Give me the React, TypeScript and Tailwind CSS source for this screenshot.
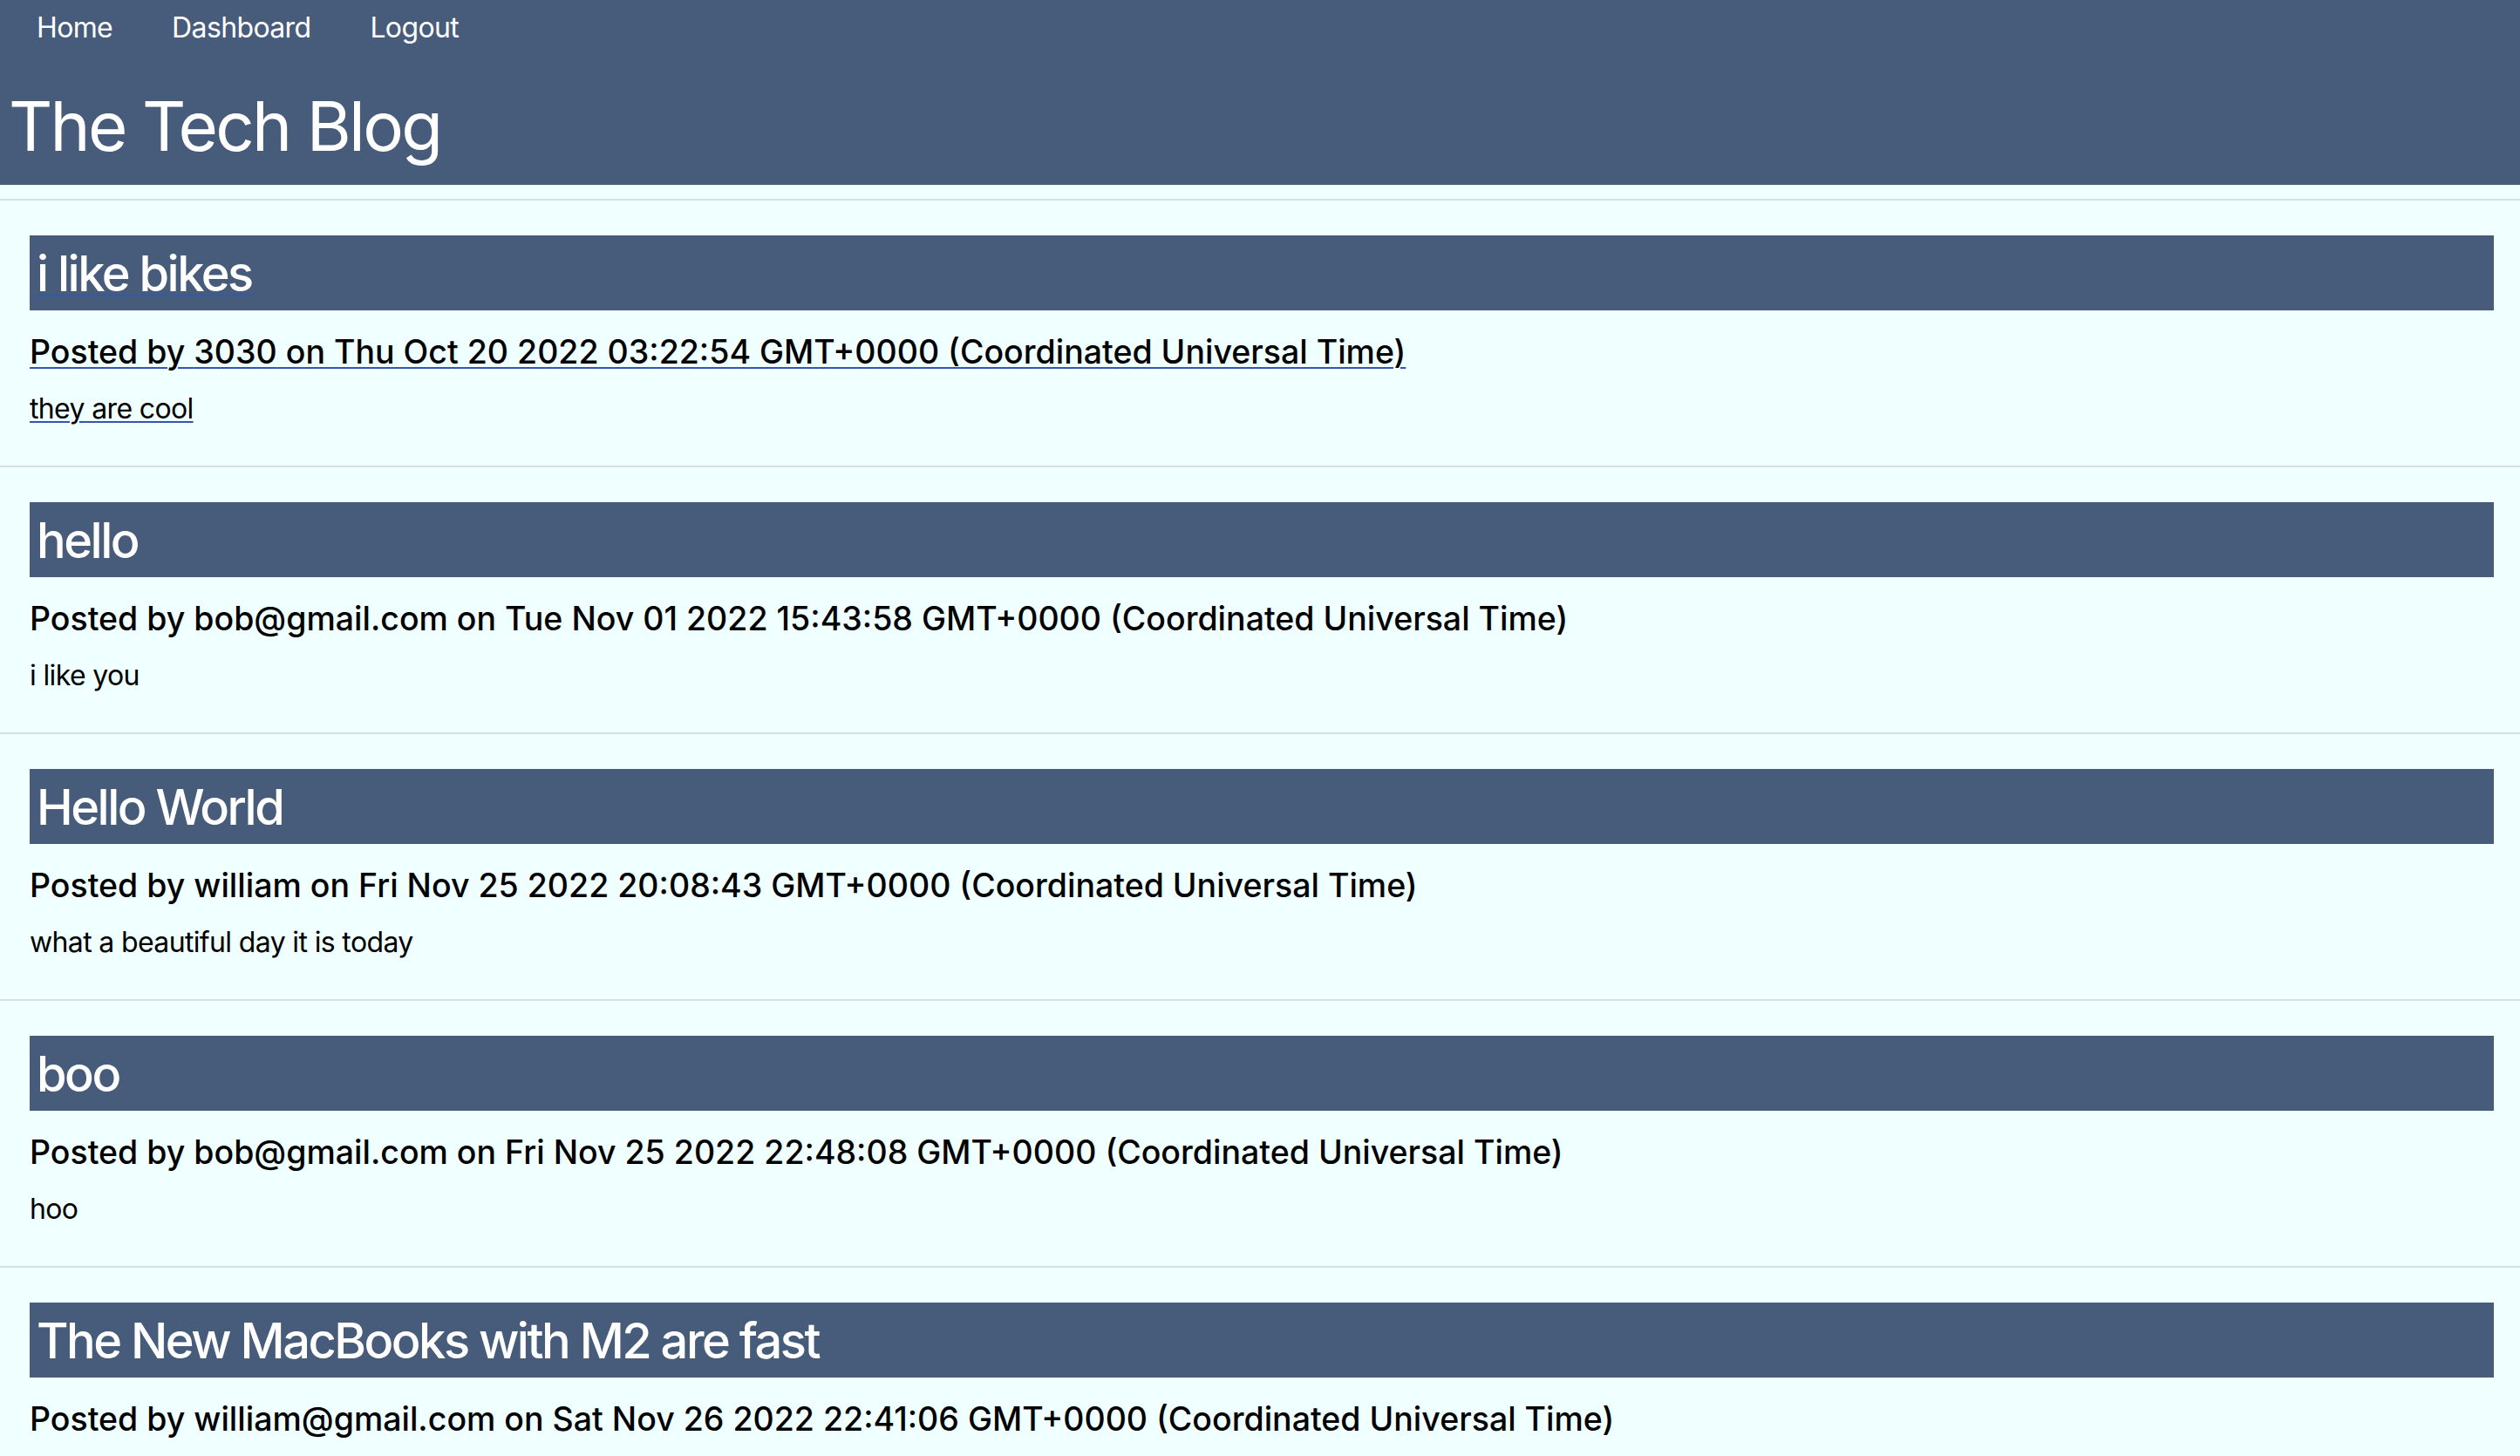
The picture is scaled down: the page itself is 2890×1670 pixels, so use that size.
import React from "react";

type Post = { title: string; author: string; date: string; body?: string; linked?: boolean };

const posts: Post[] = [
  { title: "i like bikes", author: "3030", date: "Thu Oct 20 2022 03:22:54 GMT+0000 (Coordinated Universal Time)", body: "they are cool", linked: true },
  { title: "hello", author: "bob@gmail.com", date: "Tue Nov 01 2022 15:43:58 GMT+0000 (Coordinated Universal Time)", body: "i like you" },
  { title: "Hello World", author: "william", date: "Fri Nov 25 2022 20:08:43 GMT+0000 (Coordinated Universal Time)", body: "what a beautiful day it is today" },
  { title: "boo", author: "bob@gmail.com", date: "Fri Nov 25 2022 22:48:08 GMT+0000 (Coordinated Universal Time)", body: "hoo" },
  { title: "The New MacBooks with M2 are fast", author: "william@gmail.com", date: "Sat Nov 26 2022 22:41:06 GMT+0000 (Coordinated Universal Time)" },
];

function PostCard({ p }: { p: Post }) {
  const u = p.linked
    ? "underline decoration-[#3654b4] decoration-2 underline-offset-[4px]"
    : "";
  return (
    <div>
      <div className="h-[2px] bg-[#d4e0e0]" />
      <div className="pl-[34px] pr-[30px] pt-[40px] pb-[49.5px]">
        <div className="h-[86px] bg-[#475c7a] flex items-center pl-[8px] pt-[2px]">
          <span className={`text-[56px] leading-none font-medium text-white tracking-[-0.045em] ${u}`}>{p.title}</span>
        </div>
        <div className="mt-[29px] text-[37.5px] leading-none font-medium text-black tracking-[0em]">
          <span className={u}>
            Posted by {p.author} on {p.date}
          </span>
        </div>
        {p.body && (
          <div className="mt-[30px] text-[32px] leading-none text-black tracking-[-0.02em]">
            <span className={p.linked ? "underline decoration-[#3654b4] decoration-2 underline-offset-[3px]" : ""}>{p.body}</span>
          </div>
        )}
      </div>
    </div>
  );
}

export default function App() {
  return (
    <div
      className="min-h-screen bg-[#f0ffff] overflow-hidden"
      style={{ fontFamily: "Inter, 'Liberation Sans', sans-serif" }}
    >
      <header className="h-[212px] bg-[#475c7a] text-white">
        <nav className="flex gap-[68px] pl-[42px] pt-[16px] text-[32px] leading-none tracking-[-0.02em]">
          <a href="#">Home</a>
          <a href="#">Dashboard</a>
          <a href="#">Logout</a>
        </nav>
        <h1 className="mt-[58px] pl-[10px] text-[78px] leading-none tracking-[-0.035em]">The Tech Blog</h1>
      </header>
      <div className="h-[16px]" />
      {posts.map((p, i) => (
        <PostCard key={i} p={p} />
      ))}
    </div>
  );
}
